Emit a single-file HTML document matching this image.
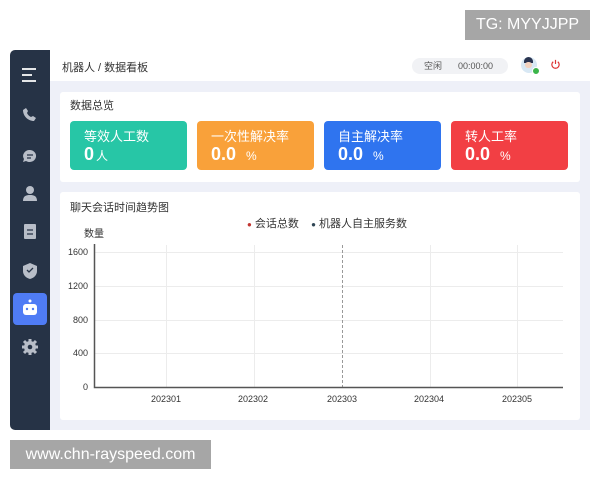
<!DOCTYPE html><html><head><meta charset="utf-8"><style>
*{margin:0;padding:0;box-sizing:border-box}
body{width:600px;height:480px;background:#fff;font-family:"Liberation Sans","Noto Sans CJK SC",sans-serif;position:relative;overflow:hidden;color:#333}
.abs{position:absolute}
.side{left:10px;top:50px;width:40px;height:380px;background:#263346;border-radius:5px 0 0 5px}
.main{left:50px;top:50px;width:540px;height:380px;background:#eef0f8}
.hdr{left:50px;top:50px;width:540px;height:31px;background:#fff}
.card{background:#fff;border-radius:3px}
.k{position:absolute;top:121px;width:117px;height:49px;border-radius:4px;color:#fff}
.k .t{position:absolute;left:14px;top:5px;font-size:13px}
.k .v{position:absolute;left:14px;top:23px;font-size:18px;font-weight:bold}
.k .v small{font-size:12px;font-weight:normal;margin-left:10px}
.yl{position:absolute;right:512px;font-size:9px;color:#333;text-align:right;width:40px}
.xl{position:absolute;top:394px;font-size:9px;color:#333;width:40px;text-align:center}
</style></head><body>
<div class="abs side"></div>
<div class="abs main"></div>
<div class="abs hdr"></div>
<div class="abs" style="left:62px;top:59px;font-size:11px;color:#333">机器人 / 数据看板</div>
<div class="abs" style="left:412px;top:58px;width:96px;height:16px;border-radius:8px;background:#f1f2f5;font-size:9px;color:#555;line-height:16px"><span style="margin-left:12px">空闲</span><span style="margin-left:16px">00:00:00</span></div>
<div class="abs" style="left:521px;top:57px;width:16px;height:16px;border-radius:50%;background:#d8e8f4"></div>
<div class="abs" style="left:524px;top:57px;width:9px;height:6px;border-radius:5px 5px 0 0;background:#2a3450"></div>
<div class="abs" style="left:525px;top:62px;width:7px;height:6px;border-radius:3px;background:#f3d2bf"></div>
<div class="abs" style="left:532px;top:67px;width:8px;height:8px;border-radius:50%;background:#3bb54a;border:1px solid #fff"></div>
<svg class="abs" style="left:550px;top:59px" width="11" height="11" viewBox="0 0 12 12"><path d="M3.5 3a4 4 0 1 0 5 0M6 1v4.5" fill="none" stroke="#d33" stroke-width="1.3"/></svg>
<svg class="abs" style="left:10px;top:50px" width="40" height="380" viewBox="0 0 40 380">
<g stroke="#fff" stroke-width="1.8"><path d="M12 19h14M12 25h10M12 31h14"/></g>
<path d="M13 60c0 6 5 11 11 11l2-3-3-2-2 1c-2-1-3-2-4-4l1-2-2-3z" fill="#b8bec8"/>
<path d="M20 100a6.5 6 0 1 1-4 11l-3 1 1-3a6.5 6 0 0 1 6-9z" fill="#b8bec8"/><path d="M17 105h6M17 108h4" stroke="#263346" stroke-width="1.2"/>
<circle cx="20" cy="140" r="4" fill="#b8bec8"/><path d="M13 151c0-5 3-6 7-6s7 1 7 6z" fill="#b8bec8"/>
<rect x="14" y="174" width="12" height="15" rx="1" fill="#b8bec8"/><path d="M17 180h6M17 184h6" stroke="#263346" stroke-width="1.2"/>
<path d="M20 213l7 3v5c0 4-3 7-7 8-4-1-7-4-7-8v-5z" fill="#b8bec8"/><path d="M17 220l2 2 4-4" stroke="#263346" stroke-width="1.3" fill="none"/>
<rect x="3" y="243" width="34" height="32" rx="4" fill="#4f7cf5"/>
<rect x="13" y="254" width="14" height="11" rx="3" fill="#fff"/><circle cx="20" cy="251" r="1.5" fill="#fff"/><circle cx="17" cy="259" r="1.2" fill="#4f7cf5"/><circle cx="23" cy="259" r="1.2" fill="#4f7cf5"/>
<g stroke="#b8bec8" stroke-width="3"><path d="M20 289v16M12 297h16M14 291l12 12M26 291l-12 12"/></g>
<circle cx="20" cy="297" r="6" fill="#b8bec8"/><circle cx="20" cy="297" r="2.3" fill="#263346"/>
</svg>
<div class="abs card" style="left:60px;top:92px;width:520px;height:90px"></div>
<div class="abs" style="left:70px;top:97px;font-size:11px;color:#333">数据总览</div>
<div class="k" style="left:70px;background:#27c6a6"><div class="t">等效人工数</div><div class="v">0<span style="font-size:12px;font-weight:normal;margin-left:2px">人</span></div></div>
<div class="k" style="left:197px;background:#f9a13a"><div class="t">一次性解决率</div><div class="v">0.0<small>%</small></div></div>
<div class="k" style="left:324px;background:#2f74ef"><div class="t">自主解决率</div><div class="v">0.0<small>%</small></div></div>
<div class="k" style="left:451px;background:#f23f44"><div class="t">转人工率</div><div class="v">0.0<small>%</small></div></div>
<div class="abs card" style="left:60px;top:192px;width:520px;height:228px"></div>
<div class="abs" style="left:70px;top:199px;font-size:11px;color:#333">聊天会话时间趋势图</div>
<div class="abs" style="left:247px;top:215px;font-size:11px;color:#333"><span style="color:#c23531;font-size:8px">●</span> 会话总数 &nbsp;&nbsp;&nbsp;<span style="color:#2f4554;font-size:8px">●</span> 机器人自主服务数</div>
<div class="abs" style="left:84px;top:225px;font-size:10px">数量</div>
<svg class="abs" style="left:0;top:0" width="600" height="480">
<g stroke="#ececec" stroke-width="1"><path d="M95 252.5H563M95 286.5H563M95 320.5H563M95 353.5H563"/>
<path d="M166.5 245V387M254.5 245V387M430.5 245V387M517.5 245V387"/></g>
<path d="M342.5 245V387" stroke="#999" stroke-dasharray="3 2"/>
<path d="M94.5 244V387.5H563" stroke="#555" stroke-width="1.5" fill="none"/>
</svg>
<div class="yl" style="top:247px">1600</div><div class="yl" style="top:281px">1200</div><div class="yl" style="top:315px">800</div><div class="yl" style="top:348px">400</div><div class="yl" style="top:382px">0</div>
<div class="xl" style="left:146px">202301</div><div class="xl" style="left:233px">202302</div><div class="xl" style="left:322px">202303</div><div class="xl" style="left:409px">202304</div><div class="xl" style="left:497px">202305</div>
<div class="abs" style="left:465px;top:10px;width:125px;height:30px;background:#a6a6a6;color:#fff;font-size:16px;line-height:30px;text-align:center">TG: MYYJJPP</div>
<div class="abs" style="left:10px;top:440px;width:201px;height:29px;background:#a6a6a6;color:#fff;font-size:16px;line-height:29px;text-align:center">www.chn-rayspeed.com</div>
</body></html>
